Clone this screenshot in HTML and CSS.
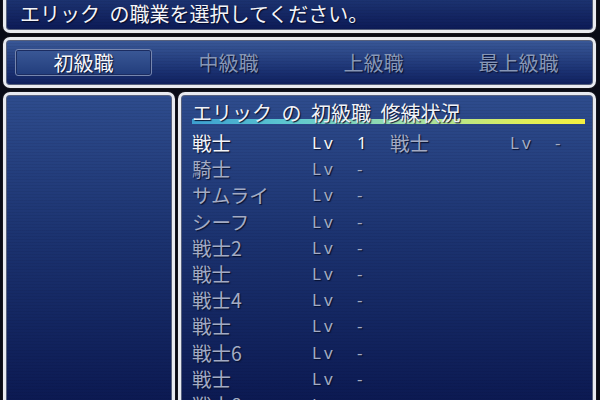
FILE: index.html
```html
<!DOCTYPE html>
<html lang="ja">
<head>
<meta charset="utf-8">
<title>職業選択</title>
<link rel="stylesheet" href="styles.css">
</head>
<body>
<div class="screen">
  <div class="win msg">
    <span class="txt">エリック の職業を選択してください。</span>
  </div>
  <div class="win tabs">
    <div class="tab active">初級職</div>
    <div class="tab">中級職</div>
    <div class="tab">上級職</div>
    <div class="tab">最上級職</div>
  </div>
  <div class="panels">
    <div class="win side"></div>
    <div class="win main">
      <div class="head">エリック の 初級職 修練状況</div>
      <div class="rows">
        <div class="row cur"><span class="nm">戦士</span><span class="lv">Lv</span><span class="n">1</span><span class="nm dim">戦士</span><span class="lv dim">Lv</span><span class="n dim">-</span></div>
        <div class="row"><span class="nm">騎士</span><span class="lv">Lv</span><span class="n">-</span></div>
        <div class="row"><span class="nm">サムライ</span><span class="lv">Lv</span><span class="n">-</span></div>
        <div class="row"><span class="nm">シーフ</span><span class="lv">Lv</span><span class="n">-</span></div>
        <div class="row"><span class="nm">戦士2</span><span class="lv">Lv</span><span class="n">-</span></div>
        <div class="row"><span class="nm">戦士</span><span class="lv">Lv</span><span class="n">-</span></div>
        <div class="row"><span class="nm">戦士4</span><span class="lv">Lv</span><span class="n">-</span></div>
        <div class="row"><span class="nm">戦士</span><span class="lv">Lv</span><span class="n">-</span></div>
        <div class="row"><span class="nm">戦士6</span><span class="lv">Lv</span><span class="n">-</span></div>
        <div class="row"><span class="nm">戦士</span><span class="lv">Lv</span><span class="n">-</span></div>
        <div class="row"><span class="nm">戦士8</span><span class="lv">Lv</span><span class="n">-</span></div>
      </div>
    </div>
  </div>
</div>
</body>
</html>
```
FILE: styles.css
```css
html, body {
  margin: 0;
  padding: 0;
  width: 600px;
  height: 400px;
  overflow: hidden;
  background: #090b16;
  font-family: "Noto Sans CJK JP", "Noto Sans", sans-serif;
  color: #a8b0c8;
}

.screen {
  display: flex;
  flex-direction: column;
  gap: 4px;
  padding: 0 4px 0 3px;
}

.win {
  box-sizing: border-box;
  border: 3px solid #e8eaf0;
  border-radius: 7px;
  box-shadow: 0 0 0 1px #15151c, inset 0 0 0 1px #56607c;
  background:
    repeating-linear-gradient(180deg, rgba(0, 0, 20, 0.06) 0 1px, transparent 1px 3px),
    linear-gradient(180deg, #34528f 0%, #1d3470 55%, #0b1850 100%);
}

.msg {
  margin-top: -14px;
  height: 47px;
  display: flex;
  align-items: flex-end;
  padding: 0 0 4px 14px;
  background:
    repeating-linear-gradient(180deg, rgba(0, 0, 20, 0.06) 0 1px, transparent 1px 3px),
    linear-gradient(180deg, #223c7a 0%, #0c1a56 100%);
}

.txt {
  font-size: 20px;
  line-height: 24px;
  color: #f4f5f8;
  word-spacing: 0.25em;
  text-shadow: 1px 1px 1px #050a28;
}

.tabs {
  height: 51px;
  display: grid;
  grid-template-columns: repeat(4, 1fr);
  align-items: center;
  padding: 0 2px 0 5px;
  background:
    repeating-linear-gradient(180deg, rgba(0, 0, 20, 0.06) 0 1px, transparent 1px 3px),
    linear-gradient(180deg, #3a5998 0%, #1e3677 60%, #0f205e 100%);
}

.tab {
  height: 27px;
  margin: 0 4px;
  display: flex;
  align-items: center;
  justify-content: center;
  font-size: 20px;
  color: #8797b6;
  text-shadow: 1px 1px 1px #081030;
  border: 1px solid transparent;
  border-radius: 3px;
  box-sizing: border-box;
}

.tab.active {
  color: #f6f7fa;
  border-color: #7686ae;
  box-shadow: inset 0 0 0 1px #1b2c60;
  background: linear-gradient(180deg, #3a5896 0%, #223d7c 100%);
}

.panels {
  display: grid;
  grid-template-columns: 172px 1fr;
  gap: 3px;
  height: 330px;
}

.side, .main {
  height: 330px;
  background:
    repeating-linear-gradient(180deg, rgba(0, 0, 20, 0.06) 0 1px, transparent 1px 3px),
    linear-gradient(180deg, #2e4c8d 0%, #1b326f 45%, #0a174f 100%);
}

.main {
  padding: 5px 8px 0 11px;
}

.head {
  height: 26px;
  line-height: 26px;
  font-size: 20px;
  color: #f2f3f7;
  word-spacing: 0.25em;
  white-space: nowrap;
  text-shadow: 1px 1px 1px #06102e;
  background: linear-gradient(90deg, #3c9fd0 0%, #5ec8d0 25%, #9fe0a8 55%, #e0ee58 85%, #f4f040 100%) no-repeat;
  background-size: 100% 5px;
  background-position: 0 19px;
}

.rows {
  margin-top: 4px;
}

.row {
  display: grid;
  grid-template-columns: 118px 45px 35px 118px 45px 1fr;
  align-items: center;
  height: 26.2px;
  line-height: 24px;
  font-size: 19.5px;
  color: #a3abc4;
  text-shadow: 1px 1px 1px #06102e;
  white-space: nowrap;
}

.row.cur .nm, .row.cur .lv, .row.cur .n {
  color: #f4f5f8;
}

.row.cur .dim {
  color: #a3abc4;
}

.lv, .n {
  font-family: "Noto Sans", "DejaVu Sans", sans-serif;
  font-size: 17px;
  padding-left: 2px;
}

.lv {
  letter-spacing: 3px;
}
```
